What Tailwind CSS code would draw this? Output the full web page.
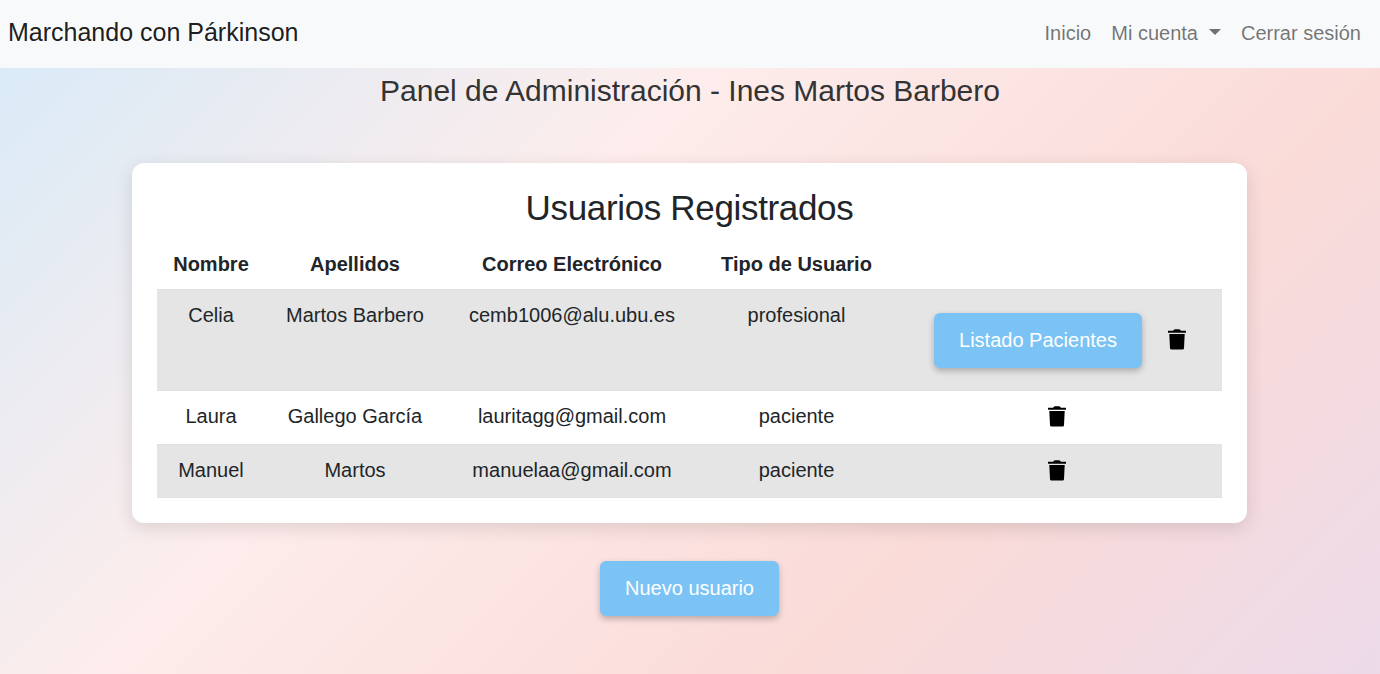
<!DOCTYPE html>
<html lang="es">
<head>
<meta charset="utf-8">
<title>Marchando con Párkinson</title>
<script src="https://cdn.jsdelivr.net/npm/@tailwindcss/browser@4"></script>
</head>
<body class="h-[674px] overflow-hidden bg-[linear-gradient(135deg,#d6eaf8_0px,#fdedec_540px,#fadbd8_1040px,#e8daef_1590px)] font-['Liberation_Sans',Arial,sans-serif] text-[20px] leading-[30px] text-[#212529]">
  <svg class="hidden">
    <symbol id="trash" viewBox="0 0 18 21">
      <path d="M0 1.700h5L6 .7Q6.3.3 6.9.3h4.2q.6 0 .9.4l1 1h5v2H0zM1.300 5h15.400l-.7 14.200q-.1 1.300-1.400 1.300H3.400Q2.100 20.500 2 19.200z"/>
    </symbol>
  </svg>
  <nav class="flex h-[68px] items-center justify-between bg-[#f8f9fa] pl-2 pr-[19px] pb-[3px]">
    <a class="pb-[2px] text-[25px] text-black/90">Marchando con Párkinson</a>
    <div class="flex gap-5 text-black/55">
      <a>Inicio</a>
      <a class="flex items-center">Mi cuenta<span class="-mt-[2px] ml-[11px] border-x-[6px] border-t-[6px] border-x-transparent border-t-black/55"></span></a>
      <a>Cerrar sesión</a>
    </div>
  </nav>
  <h1 class="mt-[5px] text-center text-[30px] leading-9 tracking-[-0.01px] text-[#333]">Panel de Administración - Ines Martos Barbero</h1>
  <main class="ml-[132px] mt-[54px] h-[360px] w-[1115px] rounded-[12px] bg-white p-[25px] pt-[24px] shadow-[0_5px_18px_rgba(0,0,0,0.12)]">
    <h2 class="mb-[11px] text-center text-[35px] leading-[42px] tracking-[-0.34px]">Usuarios Registrados</h2>
    <table class="w-full table-fixed border-collapse text-center">
      <colgroup><col class="w-[108px]"><col class="w-[180px]"><col class="w-[254px]"><col class="w-[195px]"><col class="w-[328px]"></colgroup>
      <thead>
        <tr class="h-[49px]"><th class="pb-px">Nombre</th><th class="pb-px">Apellidos</th><th class="pb-px">Correo Electrónico</th><th class="pb-px">Tipo de Usuario</th><th></th></tr>
      </thead>
      <tbody>
        <tr class="h-[101px] border-t border-[#dee2e6] bg-[#e5e5e5] align-top">
          <td class="pt-[10px]">Celia</td><td class="pt-[10px]">Martos Barbero</td><td class="pt-[10px]">cemb1006@alu.ubu.es</td><td class="pt-[10px]">profesional</td>
          <td class="pt-[23px]">
            <div class="flex items-center pl-10">
              <button class="h-[55px] w-[208px] rounded-[6px] bg-[#7bc3f5] text-white shadow-[0_3px_6px_rgba(0,0,0,0.25)]">Listado Pacientes</button>
              <svg class="mb-[2px] ml-[26px] h-[21px] w-[18px]"><use href="#trash"/></svg>
            </div>
          </td>
        </tr>
        <tr class="h-[54px] border-t border-[#dee2e6]">
          <td class="pb-[3px]">Laura</td><td class="pb-[3px]">Gallego García</td><td class="pb-[3px]">lauritagg@gmail.com</td><td class="pb-[3px]">paciente</td>
          <td class="pr-[2px] pb-[2px]"><svg class="mx-auto h-[21px] w-[18px]"><use href="#trash"/></svg></td>
        </tr>
        <tr class="h-[53px] border-y border-[#dee2e6] bg-[#e5e5e5]">
          <td class="pb-px">Manuel</td><td class="pb-px">Martos</td><td class="pb-px">manuelaa@gmail.com</td><td class="pb-px">paciente</td>
          <td class="pr-[2px] pb-px"><svg class="mx-auto h-[21px] w-[18px]"><use href="#trash"/></svg></td>
        </tr>
      </tbody>
    </table>
  </main>
  <button class="ml-[600px] mt-[38px] h-[55px] w-[179px] rounded-[6px] bg-[#7bc3f5] pb-[2px] text-white shadow-[0_3px_6px_rgba(0,0,0,0.25)]">Nuevo usuario</button>
</body>
</html>
